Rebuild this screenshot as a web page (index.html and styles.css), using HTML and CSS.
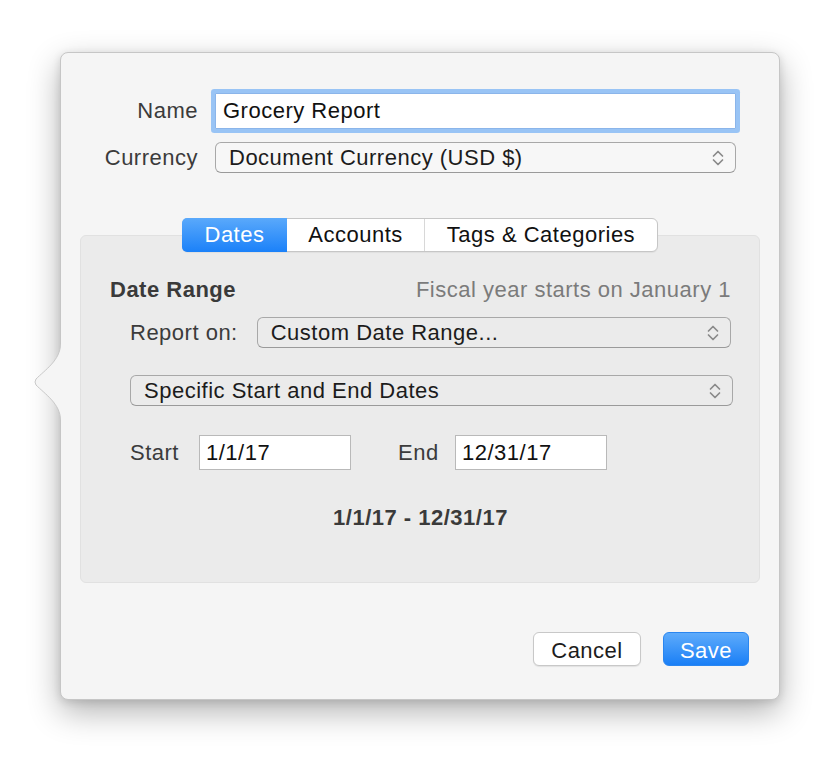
FILE: index.html
```html
<!DOCTYPE html>
<html>
<head>
<meta charset="utf-8">
<link rel="stylesheet" href="styles.css">
</head>
<body>
<div class="popover">
  <svg class="arrow" width="30" height="76" viewBox="0 0 30 76">
    <path d="M27.5 0 C27.5 16 12 26 3 35 Q1 38 3 41 C12 50 27.5 60 27.5 76 L30 76 L30 0 Z" fill="#f5f5f5"/>
    <path d="M27.5 0 C27.5 16 12 26 3 35 Q1 38 3 41 C12 50 27.5 60 27.5 76" fill="none" stroke="#c9c9c9" stroke-width="1"/>
  </svg>
  <div class="form">
    <label class="lbl">Name</label>
    <div class="textfield focused">Grocery Report</div>
    <label class="lbl">Currency</label>
    <div class="popup"><span>Document Currency (USD $)</span><svg class="chev" width="14" height="20" viewBox="0 0 14 20"><path d="M2.5 8 L7 3.5 L11.5 8 M2.5 12 L7 16.5 L11.5 12" fill="none" stroke="#8a8a8a" stroke-width="1.7" stroke-linecap="round" stroke-linejoin="round"/></svg></div>
  </div>

  <div class="tabview">
    <div class="tabs">
      <div class="tab active">Dates</div>
      <div class="tab t2">Accounts</div>
      <div class="tab t3">Tags &amp; Categories</div>
    </div>
    <div class="tabbox">
      <div class="head">
        <span class="title">Date Range</span>
        <span class="note">Fiscal year starts on January 1</span>
      </div>
      <div class="inner">
        <div class="row report">
          <label class="lbl">Report on:</label>
          <div class="popup grow"><span>Custom Date Range...</span><svg class="chev" width="14" height="20" viewBox="0 0 14 20"><path d="M2.5 8 L7 3.5 L11.5 8 M2.5 12 L7 16.5 L11.5 12" fill="none" stroke="#8a8a8a" stroke-width="1.7" stroke-linecap="round" stroke-linejoin="round"/></svg></div>
        </div>
        <div class="popup specific"><span>Specific Start and End Dates</span><svg class="chev" width="14" height="20" viewBox="0 0 14 20"><path d="M2.5 8 L7 3.5 L11.5 8 M2.5 12 L7 16.5 L11.5 12" fill="none" stroke="#8a8a8a" stroke-width="1.7" stroke-linecap="round" stroke-linejoin="round"/></svg></div>
        <div class="row dates">
          <label class="lbl start">Start</label>
          <div class="datefield">1/1/17</div>
          <label class="lbl end">End</label>
          <div class="datefield">12/31/17</div>
        </div>
      </div>
      <div class="summary">1/1/17 - 12/31/17</div>
    </div>
  </div>

  <div class="buttons">
    <button class="btn cancel">Cancel</button>
    <button class="btn save">Save</button>
  </div>
</div>
</body>
</html>
```
FILE: styles.css
```css
html, body {
  margin: 0;
  padding: 0;
  background: #ffffff;
}
body {
  font-family: "Liberation Sans", Arial, sans-serif;
  font-size: 22px;
  letter-spacing: 0.5px;
  color: #1c1c1c;
  padding: 52px 0 0 60px;
  height: 768px;
  box-sizing: border-box;
}
.popover {
  position: relative;
  box-sizing: border-box;
  width: 720px;
  height: 648px;
  background: #f5f5f5;
  border: 1px solid #c6c6c6;
  border-radius: 8px;
  box-shadow: 0 12px 32px rgba(0,0,0,0.30), 0 2px 8px rgba(0,0,0,0.12);
  display: flex;
  flex-direction: column;
  padding: 40px 43px 33px 17px;
}
.arrow {
  position: absolute;
  left: -28px;
  top: 291px;
  display: block;
}
.form {
  display: grid;
  grid-template-columns: 120px 1fr;
  column-gap: 17px;
  row-gap: 13px;
  align-items: center;
}
.lbl {
  color: #3b3b3b;
  text-align: right;
  white-space: nowrap;
}
.textfield {
  height: 36px;
  box-sizing: border-box;
  background: #fff;
  border: 1px solid #8bb5ea;
  box-shadow: 0 0 0 4px #99c4f5;
  border-radius: 1px;
  padding: 0 7px;
  display: flex;
  align-items: center;
  color: #111;
}
.popup {
  height: 31px;
  box-sizing: border-box;
  border: 1px solid #a8a8a8;
  border-bottom-color: #9a9a9a;
  border-radius: 6px;
  background: #f7f7f7;
  display: flex;
  align-items: center;
  justify-content: space-between;
  padding: 0 10px 0 13px;
  color: #1c1c1c;
}
.chev {
  display: block;
}
.tabview {
  margin: 45px -24px 0 2px;
  display: flex;
  flex-direction: column;
  align-items: center;
}
.tabs {
  position: relative;
  z-index: 1;
  display: flex;
  height: 34px;
  box-sizing: border-box;
  background: #fff;
  border: 1px solid #c6c6c6;
  border-radius: 6px;
  margin-bottom: -17px;
  box-shadow: 0 1px 1px rgba(0,0,0,0.05);
}
.tab {
  display: flex;
  align-items: center;
  justify-content: center;
  box-sizing: border-box;
  color: #111;
  border-left: 1px solid #d8d8d8;
}
.tab.active {
  width: 105px;
  border-left: none;
  background: linear-gradient(#5aa9fb, #1b81f9);
  color: #fff;
  border-radius: 5px 0 0 5px;
  margin: -1px 0 -1px -1px;
}
.tab.t2 {
  width: 137px;
  border-left: none;
}
.tab.t3 {
  width: 233px;
}
.tabbox {
  align-self: stretch;
  box-sizing: border-box;
  height: 348px;
  background: #ebebeb;
  border: 1px solid #e1e1e1;
  border-radius: 6px;
  padding: 41px 28px 0 29px;
}
.head {
  display: flex;
  justify-content: space-between;
  align-items: center;
  height: 26px;
}
.title {
  font-weight: bold;
  color: #3a3a3a;
}
.note {
  color: #7b7b7b;
}
.inner {
  padding-left: 20px;
  margin-right: -2px;
}
.row {
  display: flex;
  align-items: center;
}
.report {
  margin-top: 14px;
}
.report .lbl {
  margin-right: 19px;
}
.grow {
  flex: 1;
  background: transparent;
}
.report .grow {
  margin-right: 2px;
}
.specific {
  margin-top: 27px;
  background: transparent;
}
.dates {
  margin-top: 29px;
}
.dates .lbl {
  text-align: left;
}
.dates .lbl.start {
  width: 69px;
}
.dates .lbl.end {
  width: 57px;
  margin-left: 47px;
}
.datefield {
  width: 152px;
  height: 35px;
  box-sizing: border-box;
  background: #fff;
  border: 1px solid #b9b9b9;
  padding: 0 6px;
  display: flex;
  align-items: center;
  color: #111;
}
.summary {
  margin-top: 35px;
  text-align: center;
  font-weight: bold;
  color: #3a3a3a;
  height: 26px;
  line-height: 26px;
}
.buttons {
  margin-top: auto;
  display: flex;
  justify-content: flex-end;
  gap: 22px;
  margin-right: -13px;
}
.btn {
  font-family: inherit;
  font-size: 22px;
  letter-spacing: 0.5px;
  height: 34px;
  border-radius: 6px;
  padding: 3px 0 0 0;
  cursor: default;
}
.cancel {
  width: 108px;
  background: #fff;
  border: 1px solid #c8c8c8;
  color: #1c1c1c;
  box-shadow: 0 1px 1px rgba(0,0,0,0.08);
}
.save {
  width: 86px;
  background: linear-gradient(#5eabfb, #1a7ff6);
  border: 1px solid #2a86f0;
  color: #fff;
}
```
